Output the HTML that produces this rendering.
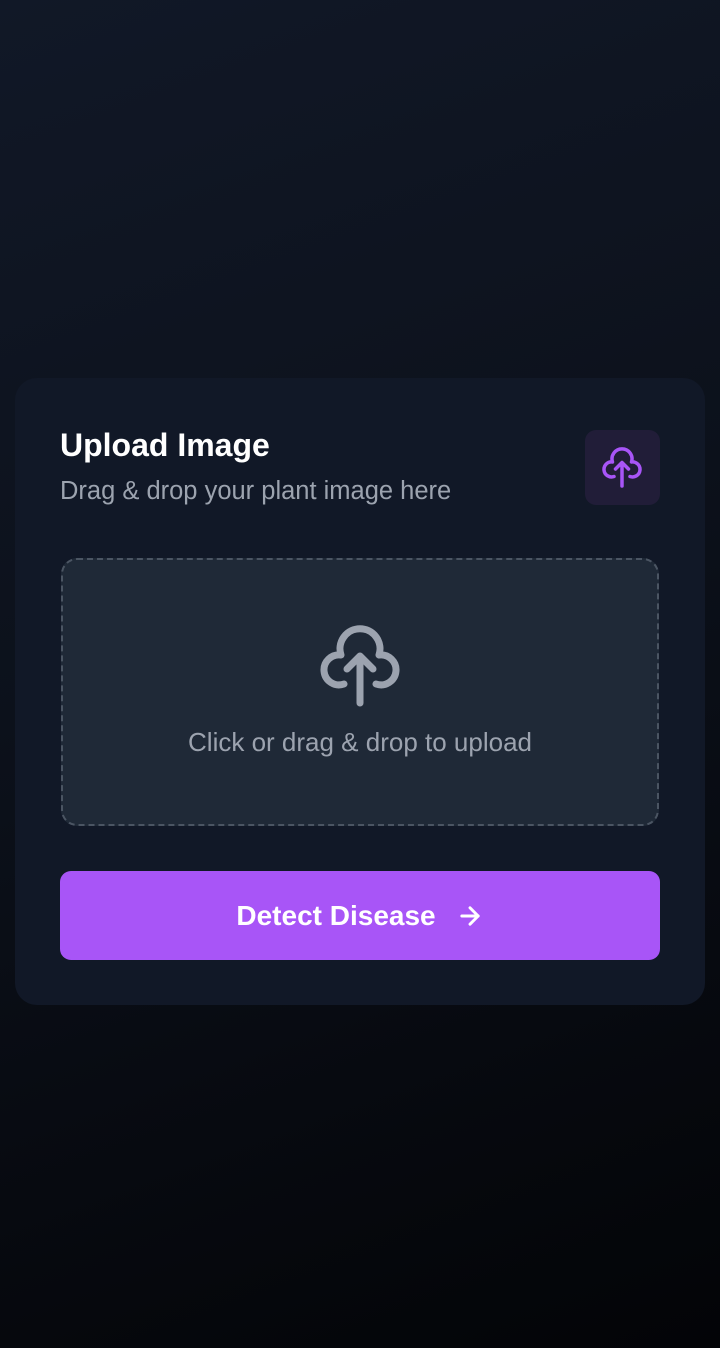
<!DOCTYPE html>
<html><head><style>
html,body{margin:0;padding:0}
body{width:720px;height:1348px;background:linear-gradient(160deg,#111827 0%,#0c111b 45%,#030407 100%);font-family:"Liberation Sans",Roboto,sans-serif;position:relative;overflow:hidden}
.card{position:absolute;left:15px;top:378px;width:690px;height:627px;background:#111827;border-radius:22px}
.t{position:absolute;left:45px;top:49px;color:#fff;font-size:32px;font-weight:bold}
.s{position:absolute;left:45px;top:99px;color:#9ca3af;font-size:25.5px}
.ib{position:absolute;left:570px;top:52px;width:75px;height:75px;border-radius:11px;background:#211d38}
.dz{position:absolute;left:46px;top:180px;width:594px;height:264px;background:#1f2937;border:2px dashed #4b5563;border-radius:16px}
.dt{position:absolute;left:0;right:0;top:167px;text-align:center;color:#9ca3af;font-size:26px}
.btn{position:absolute;left:45px;top:493px;width:600px;height:89px;background:#a855f7;border-radius:11px;color:#fff;font-size:28px;font-weight:bold;display:flex;align-items:center;justify-content:center}
svg{overflow:visible}
</style></head><body>
<div class="card">
<div class="t">Upload Image</div>
<div class="s">Drag &amp; drop your plant image here</div>
<div class="ib"><svg style="position:absolute;left:16px;top:14px" width="42" height="46" viewBox="318 618 84 92" fill="none" stroke="#a855f7" stroke-width="7" stroke-linecap="round" stroke-linejoin="round"><path d="M344 683A15 15 0 1 1 341 654A20 20 0 1 1 379 654A15 15 0 1 1 376 683"/><path d="M360 702V656M347 668L360 655L373 668"/></svg></div>
<div class="dz">
<svg style="position:absolute;left:255px;top:59px" width="84" height="92" viewBox="318 618 84 92" fill="none" stroke="#9ca3af" stroke-width="7" stroke-linecap="round" stroke-linejoin="round"><path d="M344 683A15 15 0 1 1 341 654A20 20 0 1 1 379 654A15 15 0 1 1 376 683"/><path d="M360 702V656M347 668L360 655L373 668"/></svg>
<div class="dt">Click or drag &amp; drop to upload</div>
</div>
<div class="btn">Detect Disease<svg style="margin-left:20px" width="28" height="28" viewBox="0 0 24 24" fill="none" stroke="#fff" stroke-width="2.5" stroke-linecap="round" stroke-linejoin="round"><path d="M5 12h14"/><path d="m12 5 7 7-7 7"/></svg></div>
</div>
</body></html>
